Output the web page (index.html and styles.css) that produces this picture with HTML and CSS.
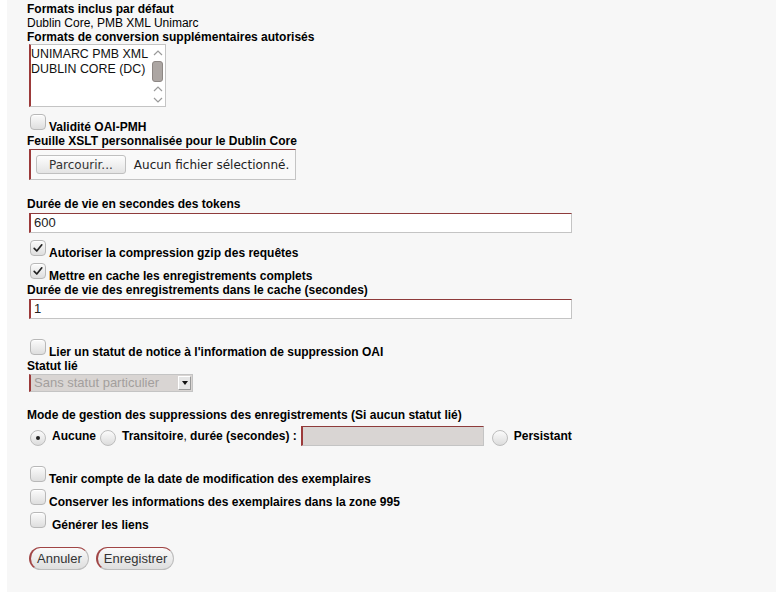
FILE: index.html
```html
<!DOCTYPE html>
<html lang="fr">
<head>
<meta charset="utf-8">
<title>OAI</title>
<link rel="stylesheet" href="styles.css">
</head>
<body>
<div class="panel">
  <div class="lbl first">Formats inclus par défaut</div>
  <div class="txt">Dublin Core, PMB XML Unimarc</div>
  <div class="lbl">Formats de conversion supplémentaires autorisés</div>
  <div class="listbox">
    <div class="opts">
      <div class="opt">UNIMARC PMB XML</div>
      <div class="opt">DUBLIN CORE (DC)</div>
    </div>
    <div class="sbar">
      <svg class="chev up1" width="10" height="6" viewBox="0 0 10 6"><polyline points="1,5 5,1 9,5" fill="none" stroke="#9a9a9a" stroke-width="1.2"/></svg>
      <div class="thumb"></div>
      <svg class="chev up2" width="10" height="6" viewBox="0 0 10 6"><polyline points="1,5 5,1 9,5" fill="none" stroke="#9a9a9a" stroke-width="1.2"/></svg>
      <svg class="chev down" width="10" height="6" viewBox="0 0 10 6"><polyline points="1,1 5,5 9,1" fill="none" stroke="#9a9a9a" stroke-width="1.2"/></svg>
    </div>
  </div>

  <div class="cb-row gap7"><span class="cb"></span><span class="cbl">Validité OAI-PMH</span></div>
  <div class="lbl">Feuille XSLT personnalisée pour le Dublin Core</div>
  <div class="filebox"><span class="fbtn">Parcourir...</span><span class="ftxt">Aucun fichier sélectionné.</span></div>

  <div class="lbl gap17">Durée de vie en secondes des tokens</div>
  <div class="tinput">600</div>

  <div class="cb-row gap7"><span class="cb checked"><svg width="16" height="16" viewBox="0 0 16 16"><path d="M4.2 8.3 L6.8 11 L11.8 4.8" fill="none" stroke="#222" stroke-width="1.7" stroke-linecap="round" stroke-linejoin="round"/></svg></span><span class="cbl">Autoriser la compression gzip des requêtes</span></div>
  <div class="cb-row gap3"><span class="cb checked"><svg width="16" height="16" viewBox="0 0 16 16"><path d="M4.2 8.3 L6.8 11 L11.8 4.8" fill="none" stroke="#222" stroke-width="1.7" stroke-linecap="round" stroke-linejoin="round"/></svg></span><span class="cbl">Mettre en cache les enregistrements complets</span></div>
  <div class="lbl">Durée de vie des enregistrements dans le cache (secondes)</div>
  <div class="tinput">1</div>

  <div class="cb-row gap20"><span class="cb"></span><span class="cbl">Lier un statut de notice à l'information de suppression OAI</span></div>
  <div class="lbl">Statut lié</div>
  <div class="dselect"><span class="dtext">Sans statut particulier</span><span class="dbtn"><svg width="6" height="4" viewBox="0 0 6 4"><polygon points="0,0 6,0 3,4" fill="#111"/></svg></span></div>

  <div class="lbl gap16">Mode de gestion des suppressions des enregistrements (Si aucun statut lié)</div>
  <div class="radio-row">
    <span class="rd first-rd on"><span class="dot"></span></span><span class="rl">Aucune</span>
    <span class="rd"></span><span class="rl">Transitoire<span class="thin">,</span> durée (secondes) :</span>
    <span class="dinput"></span>
    <span class="rd r3"></span><span class="rl">Persistant</span>
  </div>

  <div class="cb-row gap20"><span class="cb"></span><span class="cbl">Tenir compte de la date de modification des exemplaires</span></div>
  <div class="cb-row gap3"><span class="cb"></span><span class="cbl">Conserver les informations des exemplaires dans la zone 995</span></div>
  <div class="cb-row gap3"><span class="cb"></span><span class="cbl extra">Générer les liens</span></div>

  <div class="btns">
    <span class="btn">Annuler</span>
    <span class="btn">Enregistrer</span>
  </div>
</div>
</body>
</html>
```

FILE: styles.css
```css
html, body {
  margin: 0;
  padding: 0;
  background: #ffffff;
}
.panel {
  margin-left: 7px;
  width: 769px;
  height: 592px;
  box-sizing: border-box;
  background: #f7f7f7;
  padding: 2px 0 0 20px;
  font-family: "Liberation Sans", Arial, sans-serif;
  font-size: 12px;
  color: #000;
  overflow: hidden;
}
.lbl {
  font-weight: bold;
  line-height: 14px;
  white-space: nowrap;
}
.txt {
  line-height: 14px;
}
.gap17 { margin-top: 17px; }
.gap16 { margin-top: 16px; }
.gap7 { margin-top: 7px; }
.gap3 { margin-top: 3px; }
.gap20 { margin-top: 20px; }

/* listbox */
.listbox {
  margin-left: 2px;
  width: 137px;
  height: 63px;
  box-sizing: border-box;
  border: 1px solid #c4c4c4;
  border-left: 2px solid #9c3a3a;
  background: #fff;
  display: flex;
}
.opts {
  flex: 1;
  padding-top: 2px;
  font-size: 12.4px;
  line-height: 15px;
  color: #111;
  white-space: nowrap;
}
.sbar {
  width: 14px;
  position: relative;
  flex: none;
}
.chev { position: absolute; left: 2px; }
.chev.up1 { top: 5px; }
.chev.up2 { top: 41px; }
.chev.down { top: 52px; }
.thumb {
  position: absolute;
  left: 1px;
  top: 16px;
  width: 11px;
  height: 21px;
  box-sizing: border-box;
  border: 1px solid #8d8784;
  border-radius: 3px;
  background: #aca6a3;
}

/* checkbox rows */
.cb-row {
  display: flex;
  align-items: flex-end;
  height: 20px;
}
.cb {
  flex: none;
  width: 16px;
  height: 16px;
  box-sizing: border-box;
  margin: 0 3px 4px 3px;
  border: 1px solid #b8b8b8;
  border-radius: 4px;
  background: linear-gradient(#fbfbfb, #dedede);
  box-shadow: inset 0 1px 0 #fff;
  position: relative;
}
.cb svg { position: absolute; left: -1px; top: -1px; }
.cbl {
  font-weight: bold;
  line-height: 14px;
  white-space: nowrap;
}
.cbl.extra { padding-left: 3px; }

/* file input */
.filebox {
  margin-top: 1px;
  margin-left: 2px;
  width: 267px;
  height: 31px;
  box-sizing: border-box;
  border: 1px solid #c4c4c4;
  border-top-color: #8e3b3b;
  border-left: 2px solid #9c3a3a;
  background: #f9f9f9;
  display: flex;
  align-items: center;
  padding-left: 5px;
  font-family: "DejaVu Sans", sans-serif;
  font-size: 12px;
}
.fbtn {
  height: 19px;
  line-height: 18px;
  box-sizing: border-box;
  padding: 0 12px;
  border: 1px solid #c0c0c0;
  border-radius: 3px;
  background: linear-gradient(#fdfdfd, #e4e4e4);
  color: #333;
}
.ftxt {
  margin-left: 8px;
  color: #222;
}

/* text inputs */
.tinput {
  margin-top: 2px;
  margin-left: 2px;
  width: 543px;
  height: 20px;
  box-sizing: border-box;
  border: 1px solid #c4c4c4;
  border-top-color: #8e3b3b;
  border-left: 2px solid #9c3a3a;
  background: #fff;
  padding-left: 3px;
  font-size: 13px;
  line-height: 18px;
  color: #222;
}

/* disabled select */
.dselect {
  margin-top: 1px;
  margin-left: 2px;
  width: 164px;
  height: 18px;
  box-sizing: border-box;
  border: 1px solid #c4c4c4;
  border-left: 2px solid #9c3a3a;
  background: #d9d5d3;
  display: flex;
  align-items: center;
}
.dtext {
  flex: 1;
  padding-left: 3px;
  font-size: 13px;
  line-height: 16px;
  color: #a39f9d;
  white-space: nowrap;
}
.dbtn {
  flex: none;
  width: 13px;
  height: 14px;
  margin-right: 1px;
  box-sizing: border-box;
  border: 1px solid #9a9a9a;
  border-top-color: #fff;
  border-left-color: #fff;
  background: #e6e6e6;
  display: flex;
  align-items: center;
  justify-content: center;
}

/* radios */
.radio-row {
  margin-top: 4px;
  height: 20px;
  display: flex;
  align-items: center;
}
.rd {
  flex: none;
  width: 16px;
  height: 16px;
  box-sizing: border-box;
  margin: 4px 6px 0 4px;
  border: 1px solid #bdbdbd;
  border-radius: 50%;
  background: linear-gradient(#fbfbfb, #dcdcdc);
  display: flex;
  align-items: center;
  justify-content: center;
}
.rd.first-rd { margin-left: 3px; }
.rd.r3 { margin-left: 8px; }
.dot {
  width: 4px;
  height: 4px;
  border-radius: 50%;
  background: #222;
}
.rl {
  font-weight: bold;
  line-height: 14px;
  white-space: nowrap;
}
.thin { font-weight: normal; }
.dinput {
  flex: none;
  margin-left: 4px;
  width: 183px;
  height: 20px;
  box-sizing: border-box;
  border: 1px solid #c4c4c4;
  border-top-color: #8e3b3b;
  border-left: 2px solid #9c3a3a;
  background: #d9d5d3;
}

/* buttons */
.btns {
  margin-top: 15px;
  margin-left: 2px;
  display: flex;
  gap: 7px;
}
.btn {
  height: 23px;
  box-sizing: border-box;
  padding: 0 6px;
  line-height: 21px;
  font-size: 13px;
  color: #333;
  border: 1px solid #bdbdbd;
  border-top-color: #a04545;
  border-left: 2px solid #a04545;
  border-radius: 12px;
  background: linear-gradient(#fafafa, #dedede);
}
```
